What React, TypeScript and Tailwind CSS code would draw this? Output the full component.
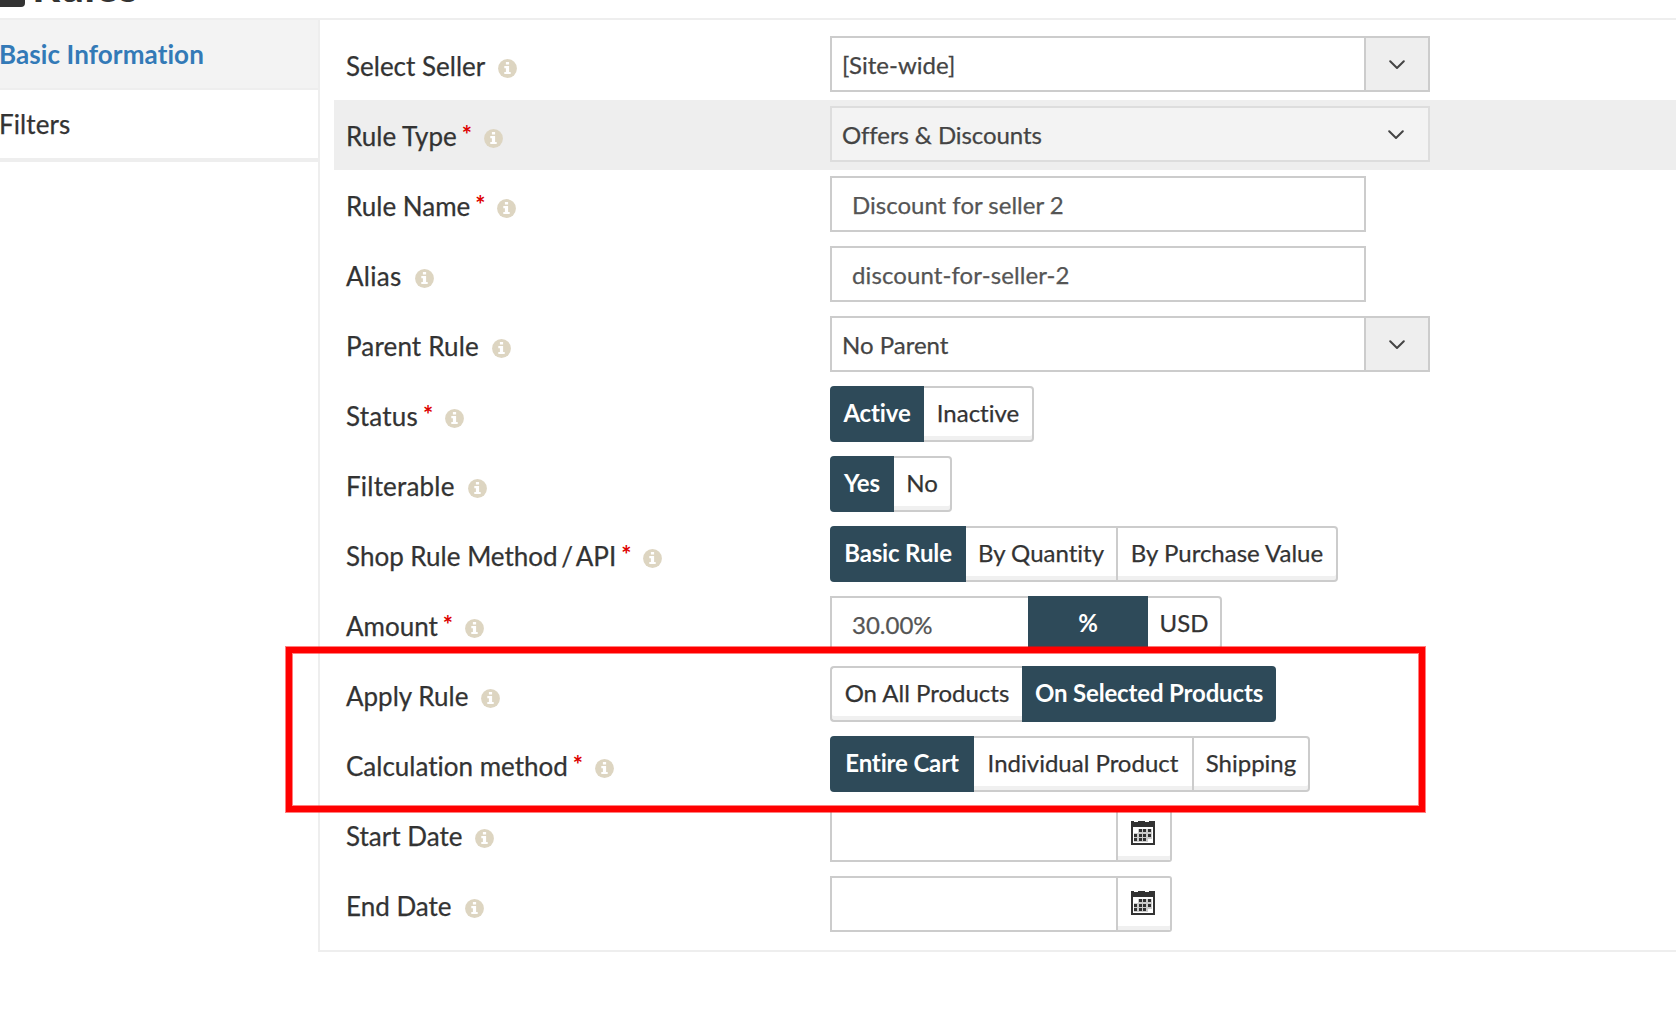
import React from "react";

function InfoIcon() {
  return (
    <svg width="19" height="19" viewBox="0 0 19 19" className="relative top-[3px] shrink-0">
      <circle cx="9.5" cy="9.5" r="9.4" fill="#ddd5c1" />
      <path
        d="M7.9 3h3.2v2.6H7.9zM6.3 7.1h4.8v5.8h1.6v2.2H6.3v-2.2h1.6V9.3H6.3z"
        fill="#fff"
      />
    </svg>
  );
}

function Chevron() {
  return (
    <svg width="16" height="10" viewBox="0 0 16 10" fill="none" className="relative top-[1px]">
      <path d="M1.2 1.2L8 8L14.8 1.2" stroke="#444" strokeWidth="2" strokeLinecap="round" strokeLinejoin="round" />
    </svg>
  );
}

function CalendarIcon() {
  return (
    <svg width="24" height="26" viewBox="0 0 24 26" className="relative top-[1px] left-[-1px]" shapeRendering="crispEdges">
      <path d="M7 9h14v10h-4v3H3v-9h4z" fill="#ccc" />
      <g fill="#333">
        <path d="M0 1h3v1h4V1h7v1h4V1h6v24H0zM2 7v16h20V7z" fillRule="evenodd" />
        <path d="M8 9h3v3H8zM12 9h3v3h-3zM17 9h3v3h-3zM3 14h3v3H3zM8 14h3v3H8zM12 14h3v3h-3zM17 14h3v3h-3zM3 18h3v3H3zM8 18h3v3H8zM12 18h3v3h-3z" />
      </g>
    </svg>
  );
}

type RowProps = { label: React.ReactNode; required?: boolean; shaded?: boolean; children: React.ReactNode };

function Row({ label, required, shaded, children }: RowProps) {
  return (
    <div className={`flex h-[70px] pl-3 ${shaded ? "bg-[#eee]" : ""}`}>
      <div className="flex w-[484px] items-center pt-[1px] text-[26px] leading-[32px] text-[#333]">
        <span className="[-webkit-text-stroke:0.25px]">{label}</span>
        {required && <span className="relative top-[-1px] mr-[-1px] ml-[5px] text-[24px] font-bold text-[#d00]">*</span>}
        <span className="ml-[13px] flex">
          <InfoIcon />
        </span>
      </div>
      <div className="flex pt-[6px]">{children}</div>
    </div>
  );
}

function Select({ value }: { value: string }) {
  return (
    <div className="flex h-14 w-[600px] border-2 border-[#ccc] bg-white text-[24px] text-[#444] [-webkit-text-stroke:0.25px]">
      <div className="flex w-[532px] items-center pt-[1px] pl-[10px]">{value}</div>
      <div className="flex flex-1 items-center justify-center border-l-2 border-[#ccc] bg-[#eee]">
        <Chevron />
      </div>
    </div>
  );
}

function Input({ value, className }: { value: string; className: string }) {
  return (
    <div className={`flex h-14 items-center border-2 border-[#ccc] bg-white pt-[1px] pl-5 text-[24px] text-[#555] [-webkit-text-stroke:0.25px] ${className}`}>
      {value}
    </div>
  );
}

function Choice({ label, active, className }: { label: string; active?: boolean; className: string }) {
  return (
    <div
      className={`flex h-14 items-center justify-center pb-[2px] text-[24px] whitespace-nowrap ${
        active
          ? "bg-[#2e4a59] font-bold tracking-[-0.15px] text-white"
          : "border-y-2 border-r-2 border-[#ccc] bg-white text-[#333] shadow-[inset_0_-4px_0_#f0f0f0] [-webkit-text-stroke:0.25px]"
      } ${className}`}
    >
      {label}
    </div>
  );
}

function DateField() {
  return (
    <>
      <Input value="" className="w-[288px]" />
      <div className="flex h-14 w-[54px] items-center justify-center rounded-r-[3px] border-y-2 border-r-2 border-[#ccc] bg-white pb-1 shadow-[inset_0_-4px_0_#f0f0f0]">
        <CalendarIcon />
      </div>
    </>
  );
}

export default function App() {
  return (
    <div className="h-[1034px] w-[1676px] overflow-hidden bg-white font-['Lato',sans-serif] [font-variant-ligatures:none]">
      <header className="flex h-[18px] items-end overflow-hidden">
        <div className="mb-[11px] h-10 w-[25px] shrink-0 rounded-br-[4px] bg-[#333]" />
        <h1 className="mb-[11px] ml-[7px] text-[44px] leading-[44px] font-bold text-[#333]">Rules</h1>
      </header>
      <div className="flex h-[934px] border-t-2 border-[#eee]">
        <nav className="w-[318px] text-[26px] text-[#333]">
          <div className="flex h-[70px] items-center border-b-2 border-[#eee] bg-[#f3f3f3] font-bold text-[#337ab7]">
            <span className="ml-[-1px] tracking-[0.1px]">Basic Information</span>
          </div>
          <div className="flex h-[72px] items-center border-b-4 border-[#eee]">
            <span className="ml-[-1px] pt-[1px] tracking-[0.1px] [-webkit-text-stroke:0.25px]">Filters</span>
          </div>
        </nav>
        <main className="relative flex-1 border-b-2 border-l-2 border-[#eee] pt-[10px] pl-[14px]">
          <Row label="Select Seller">
            <Select value="[Site-wide]" />
          </Row>
          <Row label="Rule Type" required shaded>
            <div className="flex h-14 w-[600px] items-center justify-between border-2 border-[#ddd] bg-[#f3f3f3] pr-[24px] pl-[10px] text-[24px] text-[#444]">
              <span className="pt-[1px] tracking-[-0.08px] [-webkit-text-stroke:0.25px]">Offers &amp; Discounts</span>
              <Chevron />
            </div>
          </Row>
          <Row label="Rule Name" required>
            <Input value="Discount for seller 2" className="w-[536px]" />
          </Row>
          <Row label={<span className="tracking-[0.3px]">Alias</span>}>
            <Input value="discount-for-seller-2" className="w-[536px] tracking-[0.1px]" />
          </Row>
          <Row label={<span className="tracking-[0.15px]">Parent Rule</span>}>
            <Select value="No Parent" />
          </Row>
          <Row label={<span className="tracking-[0.2px]">Status</span>} required>
            <Choice label="Active" active className="w-[94px] rounded-l-[4px]" />
            <Choice label="Inactive" className="w-[110px] rounded-r-[4px]" />
          </Row>
          <Row label={<span className="tracking-[0.2px]">Filterable</span>}>
            <Choice label="Yes" active className="w-[64px] rounded-l-[4px]" />
            <Choice label="No" className="w-[58px] rounded-r-[4px]" />
          </Row>
          <Row
            label={
              <>
                Shop Rule Method<span className="mr-[-4px] ml-[-3px]"> / </span>API
              </>
            }
            required
          >
            <Choice label="Basic Rule" active className="w-[136px] rounded-l-[4px]" />
            <Choice label="By Quantity" className="w-[152px]" />
            <Choice label="By Purchase Value" className="w-[220px] rounded-r-[4px]" />
          </Row>
          <Row label="Amount" required>
            <Input value="30.00%" className="w-[198px] border-r-0" />
            <Choice label="%" active className="w-[120px]" />
            <Choice label="USD" className="w-[74px] rounded-r-[4px]" />
          </Row>
          <Row label="Apply Rule">
            <Choice label="On All Products" className="w-[192px] rounded-l-[4px] border-l-2 border-r-0!" />
            <Choice label="On Selected Products" active className="w-[254px] rounded-r-[4px]" />
          </Row>
          <Row label="Calculation method" required>
            <Choice label="Entire Cart" active className="w-[144px] rounded-l-[4px]" />
            <Choice label="Individual Product" className="w-[220px]" />
            <Choice label="Shipping" className="w-[116px] rounded-r-[4px]" />
          </Row>
          <Row label="Start Date">
            <DateField />
          </Row>
          <Row label="End Date">
            <DateField />
          </Row>
          <div className="absolute top-[626px] left-[-35px] h-[167px] w-[1141px] border border-[#ff000080]">
            <div className="h-full border-[6px] border-[#f00]">
              <div className="h-full border border-[#ff000080]" />
            </div>
          </div>
        </main>
      </div>
    </div>
  );
}
